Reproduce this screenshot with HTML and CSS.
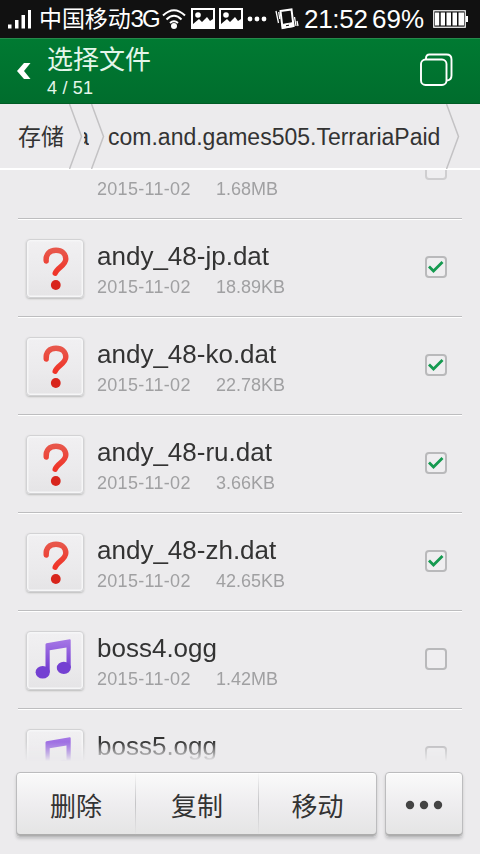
FILE: index.html
```html
<!DOCTYPE html>
<html lang="zh-CN">
<head>
<meta charset="utf-8">
<title>选择文件</title>
<link rel="stylesheet" href="styles.css">
</head>
<body>
<svg class="defs" width="0" height="0">
  <defs>
    <linearGradient id="violet" x1="0" y1="0" x2="0" y2="1"><stop offset="0" stop-color="#a678e6"/><stop offset="1" stop-color="#7038d0"/></linearGradient>
    <linearGradient id="red" x1="0" y1="0" x2="0" y2="1"><stop offset="0" stop-color="#e8564a"/><stop offset="1" stop-color="#f03428"/></linearGradient>
    <symbol id="question" viewBox="0 0 56 57">
      <path d="M19.200 21C18.500 14 22.500 10.300 29 10.300C35 10.300 38.800 14 38.800 19C38.800 25.500 30 27.500 28.200 33.200" fill="none" stroke="url(#red)" stroke-width="5.400" stroke-linecap="round"/>
      <circle cx="28.800" cy="45" r="4.900" fill="#d8251c"/>
    </symbol>
    <symbol id="music" viewBox="0 0 56 57">
      <path d="M18.500 12.500Q18.500 11.500 19.500 11.300L42.700 7.300Q43.700 7.200 43.700 8.200V36H39.500V15.500L22.700 18.300V40H18.500Z" fill="url(#violet)"/>
      <ellipse cx="15.700" cy="40.300" rx="7.100" ry="6.300" fill="#7440d2"/>
      <ellipse cx="36.800" cy="35.900" rx="7" ry="6.200" fill="#7440d2"/>
    </symbol>
    <symbol id="picture" viewBox="0 0 24 22">
      <rect x="1" y="1" width="22" height="19" fill="none" stroke="#fff" stroke-width="2"/>
      <circle cx="7" cy="7" r="2.800" fill="#fff"/>
      <path d="M2 19V16L8 11L11 14L16 9L19 13L22 11V19Z" fill="#fff"/>
    </symbol>
    <symbol id="tick" viewBox="0 0 18 18"><path d="M2 8.500L6.500 13L15.500 4" fill="none" stroke="#159a50" stroke-width="2.800"/></symbol>
  </defs>
</svg>
<div class="screen">
  <div class="status">
    <svg class="signal" width="24" height="20" viewBox="0 0 24 20" fill="#fff"><rect y="15.500" width="3.500" height="4"/><rect x="7" y="11" width="3.500" height="8.500"/><rect x="13.500" y="6" width="3.500" height="13.500"/><rect x="20" y="1" width="3" height="18.500"/></svg>
    <span class="carrier">中国移动<span class="net">3G</span></span>
    <svg class="wifi" width="24" height="22" viewBox="0 0 24 22" fill="none" stroke="#fff" stroke-width="2"><path d="M1 7.500Q12-3 23 7.500M4.500 11.500Q12 4 19.500 11.500M8 15Q12 11.500 16 15"/><circle cx="12" cy="18" r="3" fill="#fff" stroke="none"/></svg>
    <svg class="pic" width="24" height="22"><use href="#picture"/></svg>
    <svg class="pic" width="24" height="22"><use href="#picture"/></svg>
    <svg class="more" width="20" height="6" fill="#fff"><circle cx="3" cy="3" r="2.400"/><circle cx="10" cy="3" r="2.400"/><circle cx="17" cy="3" r="2.400"/></svg>
    <svg class="vibrate" width="24" height="22" viewBox="0 0 24 22" fill="none" stroke="#fff"><path d="M5.500 3L16.500 1.500L18.500 18L7.500 20Z" stroke-width="2"/><path d="M7 16.500L18.500 14.500L19 18.500L7.500 20Z" fill="#fff"/><path d="M1 3L3.500 15M3.700 4L4.800 11M19.500 9L21 18M22 13L23 18" stroke-width="1.300"/><path d="M11 17.700L14 17.200" stroke="#111"/></svg>
    <span class="clock">21:52</span>
    <span class="percent">69%</span>
    <svg class="battery" width="35" height="18" fill="#fff"><rect x=".75" y=".75" width="31.500" height="16.500" fill="none" stroke="#fff" stroke-width="1.200"/><path d="M2 2.500H6.200V15.500H2ZM7.700 2.500H12V15.500H7.700ZM13.500 2.500H18V15.500H13.500ZM19.500 2.500H24V15.500H19.500ZM25.500 2.500H31V15.500H25.500ZM33 6H35V12H33Z"/></svg>
  </div>
  <header class="header">
    <svg class="back" width="14" height="16" viewBox="0 0 14 16" fill="#fff"><path d="M7 0H13.500L7 8L13.500 16H7L0 8Z"/></svg>
    <div class="heading"><h1>选择文件</h1><p><span class="count">4 / 51</span></p></div>
    <svg class="stack" width="34" height="34" viewBox="0 0 34 34" fill="none" stroke="#fff" stroke-width="1.900"><path d="M6 6.500V5Q6 1.500 9.500 1.500H26.500Q31.500 1.500 31.500 6.500V22.500Q31.500 27 27 27.500"/><rect x="1" y="6.500" width="25.500" height="25.500" rx="4.500"/></svg>
  </header>
  <nav class="crumbs">
    <span class="crumb root">存储</span>
    <svg class="chev" width="14" height="65"><path d="M.5 0L12.500 32.500L.5 65"/></svg>
    <span class="crumb cut"><span>a</span></span>
    <svg class="chev" width="14" height="65"><path d="M.5 0L12.500 32.500L.5 65"/></svg>
    <span class="crumb path"><span class="pathname">com.and.games505.TerrariaPaid</span></span>
    <svg class="chev" width="14" height="65"><path d="M.5 0L12.500 32.500L.5 65"/></svg>
  </nav>
  <main class="list">
    <div class="row first"><div class="thumb blank"></div><div class="info"><div class="name"></div><div class="meta"><span class="date">2015-11-02</span><span>1.68MB</span></div></div><div class="box"></div></div>
    <div class="row"><div class="thumb"><svg width="56" height="57"><use href="#question"/></svg></div><div class="info"><div class="name"><span>andy_48-jp.dat</span></div><div class="meta"><span class="date">2015-11-02</span><span>18.89KB</span></div></div><div class="box"><svg width="18" height="18"><use href="#tick"/></svg></div></div>
    <div class="row"><div class="thumb"><svg width="56" height="57"><use href="#question"/></svg></div><div class="info"><div class="name"><span>andy_48-ko.dat</span></div><div class="meta"><span class="date">2015-11-02</span><span>22.78KB</span></div></div><div class="box"><svg width="18" height="18"><use href="#tick"/></svg></div></div>
    <div class="row"><div class="thumb"><svg width="56" height="57"><use href="#question"/></svg></div><div class="info"><div class="name"><span>andy_48-ru.dat</span></div><div class="meta"><span class="date">2015-11-02</span><span>3.66KB</span></div></div><div class="box"><svg width="18" height="18"><use href="#tick"/></svg></div></div>
    <div class="row"><div class="thumb"><svg width="56" height="57"><use href="#question"/></svg></div><div class="info"><div class="name"><span>andy_48-zh.dat</span></div><div class="meta"><span class="date">2015-11-02</span><span>42.65KB</span></div></div><div class="box"><svg width="18" height="18"><use href="#tick"/></svg></div></div>
    <div class="row"><div class="thumb"><svg width="56" height="57"><use href="#music"/></svg></div><div class="info"><div class="name"><span>boss4.ogg</span></div><div class="meta"><span class="date">2015-11-02</span><span>1.42MB</span></div></div><div class="box"></div></div>
    <div class="row"><div class="thumb"><svg width="56" height="57"><use href="#music"/></svg></div><div class="info"><div class="name"><span>boss5.ogg</span></div></div><div class="box"></div></div>
  </main>
  <footer class="toolbar">
    <div class="group"><button>删除</button><button>复制</button><button>移动</button></div>
    <button class="overflow"><svg width="38" height="10" fill="#444"><circle cx="5" cy="5" r="4.200"/><circle cx="19" cy="5" r="4.200"/><circle cx="33" cy="5" r="4.200"/></svg></button>
  </footer>
</div>
</body>
</html>
```
FILE: styles.css
```css
* { box-sizing: border-box; }
body { margin: 0; background: #ecebed; font-family: "Liberation Sans", "Noto Sans CJK SC", sans-serif; color: #333; }
svg { display: block; flex: none; }
.defs { position: absolute; }
.screen { width: 480px; height: 854px; display: flex; flex-direction: column; overflow: hidden; background: #ecebed; }

.status { height: 38px; flex: none; background: #111; color: #fff; display: flex; align-items: center; padding-left: 8px; white-space: nowrap; }
.carrier { width: 121px; margin-left: 7px; font-size: 23px; line-height: 38px; letter-spacing: -.100px; }
.net { font-size: 24px; letter-spacing: -2px; }
.wifi { margin-left: 2px; }
.pic { margin-left: 4px; }
.wifi + .pic { margin-left: 5px; }
.more { margin-left: 4px; }
.vibrate { margin-left: 8px; }
.clock { width: 65px; margin-left: 5px; font-size: 26px; letter-spacing: -.300px; }
.percent { width: 54px; margin-left: 3px; font-size: 26px; }
.battery { margin-left: 7px; }

.header { height: 66px; flex: none; display: flex; align-items: center; padding-left: 17px; color: #fff; background: linear-gradient(#007a32, #006d2d); border-top: 1px solid #258a4c; border-bottom: 1px solid #005c25; }
.heading { width: 373px; margin: 0 0 1px 16px; }
h1 { margin: 0; font-size: 26px; font-weight: 400; line-height: 34px; height: 34px; color: #e4f6ea; }
.heading p { margin: 1px 0 0; font-size: 18px; line-height: 20px; letter-spacing: .200px; color: #e4f6ea; }
.stack { margin-bottom: 2px; }

.crumbs { height: 66px; flex: none; display: flex; align-items: center; border-bottom: 2px solid #fff; font-size: 23px; }
.crumb { padding-top: 2px; }
.root { width: 69px; padding: 0 0 2px 18px; white-space: nowrap; }
.cut { width: 5px; margin-left: 2px; overflow: hidden; display: flex; justify-content: flex-end; }
.chev { margin-right: -1px; }
.cut + .chev { margin-left: 2px; }
.path { width: 342px; padding-left: 4px; white-space: nowrap; }
.chev path { fill: none; stroke: #c3c2c4; stroke-width: 1.500; }

.list { height: 592px; flex: none; overflow: hidden; -webkit-mask-image: linear-gradient(#000 572px, transparent 591px); mask-image: linear-gradient(#000 572px, transparent 591px); }
.row { height: 98px; margin: 0 18px; padding: 20px 0 0 8px; display: flex; border-bottom: 1px solid #bdbdbf; box-shadow: 0 1px #fff; }
.first { margin-top: -49px; }
.thumb { width: 58px; height: 59px; flex: none; border: 1px solid #d2d2d4; border-radius: 4px; background: linear-gradient(#f1f0f2, #ebeaec 60%, #e5e4e6); box-shadow: inset 0 0 0 1.500px #f6f6f7, 0 1px 2px #bbb; }
.blank { visibility: hidden; }
.info { width: 328px; margin-left: 13px; }
.name { height: 34px; line-height: 34px; font-size: 26px; white-space: nowrap; }
.meta { display: flex; margin-top: 4px; font-size: 18px; line-height: 20px; color: #a0a0a2; }
.date { width: 119px; letter-spacing: .300px; }
.box { width: 22px; height: 22px; flex: none; margin-top: 17px; border: 2px solid #b9b9bb; border-radius: 4px; background: #efeef0; }
.first .box { border-color: #cfced0; }

.toolbar { display: flex; gap: 8px; padding: 10px 0 0 16px; }
.group { width: 361px; display: flex; }
.group, .overflow { height: 65px; border: 1px solid #bcbcbe; border-radius: 4px; background: linear-gradient(#fafafa, #eeedef 50%, #e4e4e4); box-shadow: inset 0 1px #fff, inset 0 -2px #adadad, 0 2px 3px #c5c5c7; }
button { border: 0; padding: 0; background: none; color: #333; font: 26px "Liberation Sans", "Noto Sans CJK SC", sans-serif; display: flex; align-items: center; justify-content: center; }
.group button { width: 118px; flex: none; margin-bottom: 1px; }
.group button:nth-child(2) { width: 123px; }
.group button + button { border-left: 1px solid; border-image: linear-gradient(transparent, #c4c4c6 50%, transparent) 1; }
.overflow { width: 78px; }
```
